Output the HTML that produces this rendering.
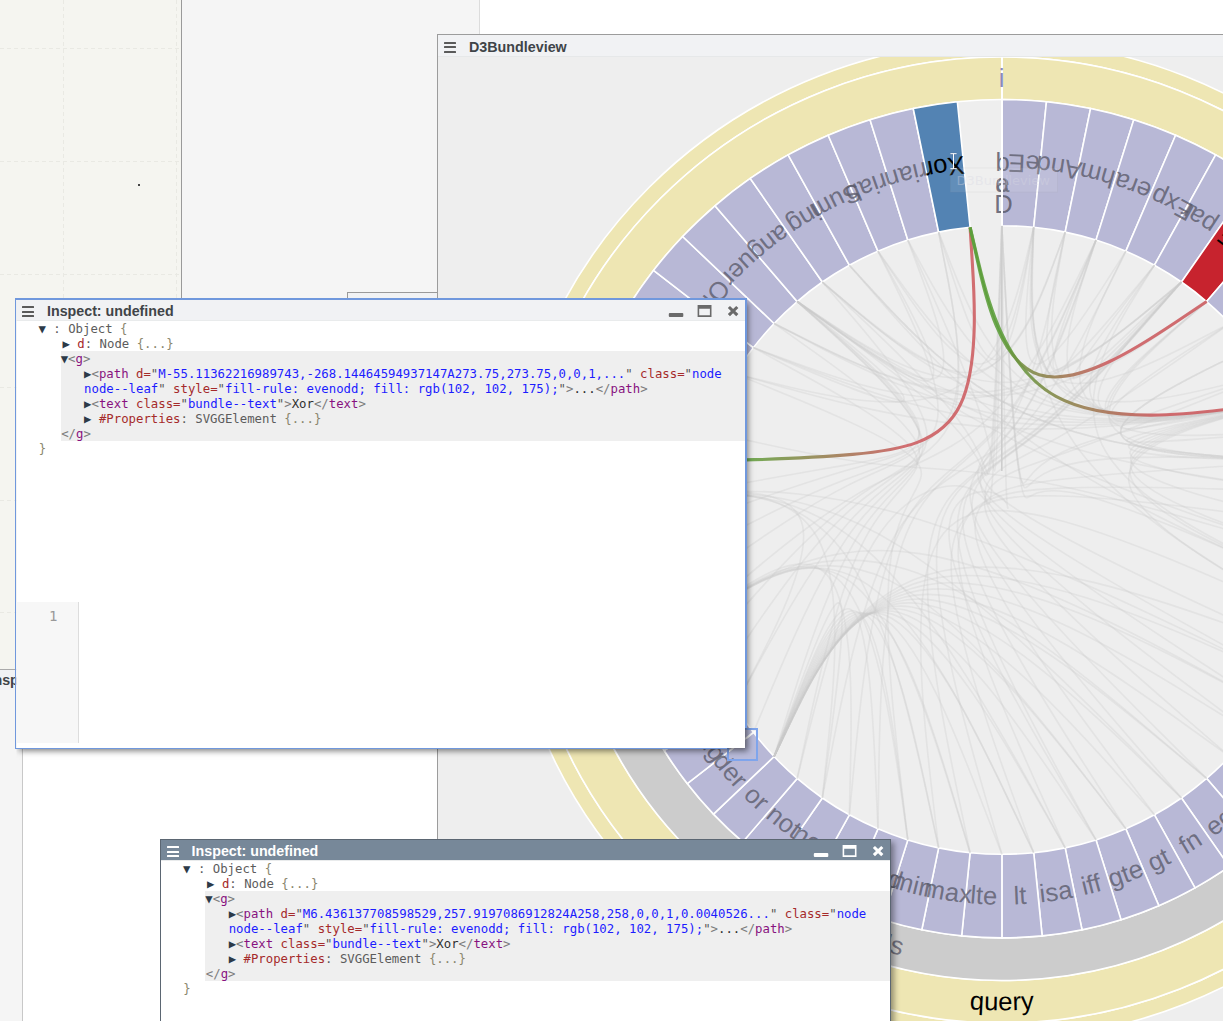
<!DOCTYPE html>
<html lang="en">
<head>
<meta charset="utf-8">
<title>D3Bundleview</title>
<style>
html,body{margin:0;padding:0;}
body{width:1223px;height:1021px;overflow:hidden;position:relative;background:#ffffff;font-family:"Liberation Sans",Arial,sans-serif;}
.abs{position:absolute;}
#paneA{left:0;top:0;width:181px;height:669px;background-color:#f5f5f0;
 background-image:
  repeating-linear-gradient(to bottom,#e9e9e3 0 4px,transparent 4px 7px),
  repeating-linear-gradient(to bottom,#e9e9e3 0 4px,transparent 4px 7px),
  repeating-linear-gradient(to right,#e9e9e3 0 4px,transparent 4px 7px),
  repeating-linear-gradient(to right,#e9e9e3 0 4px,transparent 4px 7px),
  repeating-linear-gradient(to right,#e9e9e3 0 4px,transparent 4px 7px),
  repeating-linear-gradient(to right,#e9e9e3 0 4px,transparent 4px 7px),
  repeating-linear-gradient(to right,#e9e9e3 0 4px,transparent 4px 7px),
  repeating-linear-gradient(to right,#e9e9e3 0 4px,transparent 4px 7px);
 background-repeat:no-repeat;
 background-size:1px 100%,1px 100%,100% 1px,100% 1px,100% 1px,100% 1px,100% 1px,100% 1px;
 background-position:63px 0,176px 0,0 48px,0 161px,0 274px,0 387px,0 500px,0 612px;
 border-right:1px solid #9a9a9a;box-shadow:1px 0 1px rgba(0,0,0,0.15);}
#dot{left:138px;top:184px;width:2px;height:2px;background:#444;}
#paneB{left:182px;top:0;width:297px;height:500px;background:#f5f5f5;border-right:1px solid #dcdcdc;}
#paneC{left:0;top:690px;width:22px;height:340px;background:#f5f5f5;border-right:1px solid #c8c8c8;}
.win{position:absolute;box-sizing:border-box;background:#fff;}
#win1,#win2{clip-path:inset(0px -16px -16px 0px);}
.titlebar{position:absolute;left:0;top:0;right:0;height:20.4px;background:#f1f2f4;box-shadow:0 0.8px 0 #e4e6e8;}
.title{position:absolute;left:30.6px;top:3px;font-weight:bold;font-size:14.25px;line-height:16px;color:#404448;white-space:nowrap;}
.burger{position:absolute;left:5.6px;top:6.3px;width:12.4px;height:11px;}
.burger i{display:block;height:2px;background:#5a5a5a;margin-bottom:2.3px;border-radius:0.5px}
.ctrl{position:absolute;top:0;}
/* hidden window behind */
#winH{left:-42px;top:669px;width:70px;height:22px;background:#f1f2f4;border-top:1px solid #aaa;}
#winG{left:347px;top:292px;width:91px;height:20px;background:#f1f2f4;border:1px solid #9a9a9a;}
#winD3{left:437px;top:34px;width:900px;height:1100px;border:1px solid #9c9c9c;background:#eeeeee;}
#winD3 .titlebar{height:20.8px;}
#winD3 .title{font-size:14.3px;top:3.5px;left:31px;}
#winD3 .burger{top:7px}
svg.bundle{position:absolute;left:438px;top:57px;}
#halo{left:726.6px;top:728.1px;width:27.2px;height:28.7px;border:2px solid #7fa5ec;background:rgba(200,210,245,0.12);}
#win1{left:16.4px;top:300px;width:728.8px;height:447.8px;box-shadow:3px 3px 6px rgba(0,0,0,0.5);}
.bl{position:absolute;background:#7098dd;}
#win2{left:160px;top:839px;width:731.2px;height:300px;border:1px solid #5b6672;box-shadow:3px 3px 6px rgba(0,0,0,0.4);}
#win2 .titlebar{background:#778899;height:20.4px;}
#win2 .title{color:#fff;}
#win2 .burger i{background:#fff;}
.tree{position:absolute;left:0;right:0;top:22.1px;font-family:"DejaVu Sans Mono","Liberation Mono",monospace;font-size:12.32px;line-height:15px;white-space:pre;color:#555;}
.tree div{height:15px;}
.hl{position:absolute;left:44.3px;right:0;top:51.2px;height:89.6px;background:#efefef;}
.ln{position:absolute;}
.tri{color:#2c3a48;}
.k{color:#a52a2a;}
.g{color:#5c5c5c;}
.b{color:#8a866c;}
.br{color:#7c7c7c;}
.t{color:#881280;}
.an{color:#a52a2a;}
.av{color:#1c1cff;}
.q{color:#555;}
.x{color:#303030;}
.gutter{position:absolute;left:0;top:301.9px;width:61.2px;height:140.7px;background:#f7f7f7;border-right:1px solid #dddddd;}
.lnum{position:absolute;left:0;width:41px;top:308.4px;text-align:right;font-family:"DejaVu Sans Mono","Liberation Mono",monospace;font-size:14px;line-height:16px;color:#999;}
</style>
</head>
<body>
<div id="paneA" class="abs"></div>
<div id="dot" class="abs"></div>
<div id="paneB" class="abs"></div>
<div id="winH" class="abs"><div class="title" style="left:31.5px;top:2px">Inspect: undefined</div></div>
<div id="paneC" class="abs"></div>
<div id="winG" class="abs"></div>

<div id="winD3" class="win">
  <div class="titlebar">
    <div class="burger"><i></i><i></i><i></i></div>
    <div class="title">D3Bundleview</div>
  </div>
</div>
<svg class="bundle" width="785" height="964" viewBox="438 57 785 964">
<defs>
<linearGradient id="gA" gradientUnits="userSpaceOnUse" x1="905" y1="0" x2="750" y2="0"><stop offset="0" stop-color="#cd5c60"/><stop offset="1" stop-color="#63a03f"/></linearGradient>
<linearGradient id="gB" gradientUnits="userSpaceOnUse" x1="998" y1="0" x2="1108" y2="0"><stop offset="0" stop-color="#5c9e3a"/><stop offset="1" stop-color="#cd5c60"/></linearGradient>
<linearGradient id="gC" gradientUnits="userSpaceOnUse" x1="1005" y1="0" x2="1155" y2="0"><stop offset="0" stop-color="#5c9e3a"/><stop offset="1" stop-color="#cd5c60"/></linearGradient>
<path id="lp0" d="M1040.08,164.54A377.4,377.4,0,0,0,1001.9,162.6"/>
<path id="lp1" d="M1077.87,170.33A377.4,377.4,0,0,0,1040.08,164.54"/>
<path id="lp2" d="M1114.88,179.91A377.4,377.4,0,0,0,1077.87,170.33"/>
<path id="lp3" d="M1150.73,193.19A377.4,377.4,0,0,0,1114.88,179.91"/>
<path id="lp4" d="M1185.05,210.02A377.4,377.4,0,0,0,1150.73,193.19"/>
<path id="lp5" d="M1217.5,230.24A377.4,377.4,0,0,0,1185.05,210.02"/>
<path id="lp6" d="M1247.73,253.64A377.4,377.4,0,0,0,1217.5,230.24"/>
<path id="lp7" d="M1275.44,279.98A377.4,377.4,0,0,0,1247.73,253.64"/>
<path id="lp8" d="M1300.34,308.99A377.4,377.4,0,0,0,1275.44,279.98"/>
<path id="lp9" d="M1322.18,340.37A377.4,377.4,0,0,0,1300.34,308.99"/>
<path id="lp10" d="M1340.73,373.8A377.4,377.4,0,0,0,1322.18,340.37"/>
<path id="lp11" d="M1355.81,408.93A377.4,377.4,0,0,0,1340.73,373.8"/>
<path id="lp12" d="M1367.25,445.4A377.4,377.4,0,0,0,1355.81,408.93"/>
<path id="lp13" d="M1374.95,482.85A377.4,377.4,0,0,0,1367.25,445.4"/>
<path id="lp14" d="M1378.82,520.89A377.4,377.4,0,0,0,1374.95,482.85"/>
<path id="lp15" d="M1378.82,559.11A377.4,377.4,0,0,0,1378.82,520.89"/>
<path id="lp16" d="M1374.95,597.15A377.4,377.4,0,0,0,1378.82,559.11"/>
<path id="lp17" d="M1367.25,634.6A377.4,377.4,0,0,0,1374.95,597.15"/>
<path id="lp18" d="M1335.83,663.68A356.1,356.1,0,0,0,1346.63,629.26"/>
<path id="lp19" d="M1321.61,696.82A356.1,356.1,0,0,0,1335.83,663.68"/>
<path id="lp20" d="M1304.1,728.36A356.1,356.1,0,0,0,1321.61,696.82"/>
<path id="lp21" d="M1283.5,757.97A356.1,356.1,0,0,0,1304.1,728.36"/>
<path id="lp22" d="M1260,785.34A356.1,356.1,0,0,0,1283.5,757.97"/>
<path id="lp23" d="M1233.85,810.19A356.1,356.1,0,0,0,1260,785.34"/>
<path id="lp24" d="M1205.33,832.27A356.1,356.1,0,0,0,1233.85,810.19"/>
<path id="lp25" d="M1174.72,851.35A356.1,356.1,0,0,0,1205.33,832.27"/>
<path id="lp26" d="M1142.33,867.24A356.1,356.1,0,0,0,1174.72,851.35"/>
<path id="lp27" d="M1108.5,879.77A356.1,356.1,0,0,0,1142.33,867.24"/>
<path id="lp28" d="M1073.58,888.81A356.1,356.1,0,0,0,1108.5,879.77"/>
<path id="lp29" d="M1037.93,894.27A356.1,356.1,0,0,0,1073.58,888.81"/>
<path id="lp30" d="M1001.9,896.1A356.1,356.1,0,0,0,1037.93,894.27"/>
<path id="lp31" d="M965.87,894.27A356.1,356.1,0,0,0,1001.9,896.1"/>
<path id="lp32" d="M930.22,888.81A356.1,356.1,0,0,0,965.87,894.27"/>
<path id="lp33" d="M895.3,879.77A356.1,356.1,0,0,0,930.22,888.81"/>
<path id="lp34" d="M861.47,867.24A356.1,356.1,0,0,0,895.3,879.77"/>
<path id="lp35" d="M829.08,851.35A356.1,356.1,0,0,0,861.47,867.24"/>
<path id="lp36" d="M798.47,832.27A356.1,356.1,0,0,0,829.08,851.35"/>
<path id="lp37" d="M769.95,810.19A356.1,356.1,0,0,0,798.47,832.27"/>
<path id="lp38" d="M743.8,785.34A356.1,356.1,0,0,0,769.95,810.19"/>
<path id="lp39" d="M720.3,757.97A356.1,356.1,0,0,0,743.8,785.34"/>
<path id="lp40" d="M699.7,728.36A356.1,356.1,0,0,0,720.3,757.97"/>
<path id="lp41" d="M682.19,696.82A356.1,356.1,0,0,0,699.7,728.36"/>
<path id="lp42" d="M667.97,663.68A356.1,356.1,0,0,0,682.19,696.82"/>
<path id="lp43" d="M657.17,629.26A356.1,356.1,0,0,0,667.97,663.68"/>
<path id="lp44" d="M649.91,593.92A356.1,356.1,0,0,0,657.17,629.26"/>
<path id="lp45" d="M646.26,558.04A356.1,356.1,0,0,0,649.91,593.92"/>
<path id="lp46" d="M646.26,521.96A356.1,356.1,0,0,0,646.26,558.04"/>
<path id="lp47" d="M649.91,486.08A356.1,356.1,0,0,0,646.26,521.96"/>
<path id="lp48" d="M657.17,450.74A356.1,356.1,0,0,0,649.91,486.08"/>
<path id="lp49" d="M667.97,416.32A356.1,356.1,0,0,0,657.17,450.74"/>
<path id="lp51" d="M681.62,340.37A377.4,377.4,0,0,0,663.07,373.8"/>
<path id="lp52" d="M703.46,308.99A377.4,377.4,0,0,0,681.62,340.37"/>
<path id="lp53" d="M728.36,279.98A377.4,377.4,0,0,0,703.46,308.99"/>
<path id="lp54" d="M756.07,253.64A377.4,377.4,0,0,0,728.36,279.98"/>
<path id="lp55" d="M786.3,230.24A377.4,377.4,0,0,0,756.07,253.64"/>
<path id="lp56" d="M818.75,210.02A377.4,377.4,0,0,0,786.3,230.24"/>
<path id="lp57" d="M853.07,193.19A377.4,377.4,0,0,0,818.75,210.02"/>
<path id="lp58" d="M888.92,179.91A377.4,377.4,0,0,0,853.07,193.19"/>
<path id="lp59" d="M925.93,170.33A377.4,377.4,0,0,0,888.92,179.91"/>
<path id="lp60" d="M963.72,164.54A377.4,377.4,0,0,0,925.93,170.33"/>
<path id="lpm" d="M625.54,355.39A419.2,419.2,0,1,0,1407.72,645.07"/>
<path id="lpq" d="M1001.9,78.25A461.75,461.75,0,1,0,1001.9,1001.75A461.75,461.75,0,1,0,1001.9,78.25"/>
</defs>
<rect x="438" y="57" width="785" height="964" fill="#eeeeee"/>
<g stroke="#fff" stroke-width="1.6" fill-rule="evenodd">
<path d="M1001.9,41.2A498.8,498.8,0,1,1,1001.9,1038.8A498.8,498.8,0,1,1,1001.9,41.2ZM1001.9,57A483,483,0,1,1,1001.9,1023A483,483,0,1,1,1001.9,57Z" fill="#eee6b3"/>
<path d="M1001.9,57A483,483,0,1,1,1001.9,1023A483,483,0,1,1,1001.9,57ZM1001.9,99.5A440.5,440.5,0,1,1,1001.9,980.5A440.5,440.5,0,1,1,1001.9,99.5Z" fill="#eee6b3"/>
<path d="M1428.34,650.41A440.5,440.5,0,1,1,606.42,346.01L644.66,364.77A397.9,397.9,0,1,0,1387.1,639.73Z" fill="#cccccc"/>
<path d="M1001.9,99.5A440.5,440.5,0,0,1,1046.46,101.76L1033.7,227.31A314.3,314.3,0,0,0,1001.9,225.7Z" fill="#b8b8d6"/>
<path d="M1046.46,101.76A440.5,440.5,0,0,1,1090.57,108.52L1065.17,232.13A314.3,314.3,0,0,0,1033.7,227.31Z" fill="#b8b8d6"/>
<path d="M1090.57,108.52A440.5,440.5,0,0,1,1133.77,119.7L1095.99,240.11A314.3,314.3,0,0,0,1065.17,232.13Z" fill="#b8b8d6"/>
<path d="M1133.77,119.7A440.5,440.5,0,0,1,1175.61,135.2L1125.85,251.17A314.3,314.3,0,0,0,1095.99,240.11Z" fill="#b8b8d6"/>
<path d="M1175.61,135.2A440.5,440.5,0,0,1,1215.68,154.85L1154.43,265.19A314.3,314.3,0,0,0,1125.85,251.17Z" fill="#b8b8d6"/>
<path d="M1215.68,154.85A440.5,440.5,0,0,1,1253.54,178.45L1181.45,282.03A314.3,314.3,0,0,0,1154.43,265.19Z" fill="#b8b8d6"/>
<path d="M1253.54,178.45A440.5,440.5,0,0,1,1288.83,205.77L1206.63,301.52A314.3,314.3,0,0,0,1181.45,282.03Z" fill="#c7232e"/>
<path d="M1288.83,205.77A440.5,440.5,0,0,1,1321.17,236.51L1229.7,323.46A314.3,314.3,0,0,0,1206.63,301.52Z" fill="#b8b8d6"/>
<path d="M1321.17,236.51A440.5,440.5,0,0,1,1350.24,270.37L1250.44,347.62A314.3,314.3,0,0,0,1229.7,323.46Z" fill="#b8b8d6"/>
<path d="M1350.24,270.37A440.5,440.5,0,0,1,1375.73,306.99L1268.63,373.75A314.3,314.3,0,0,0,1250.44,347.62Z" fill="#b8b8d6"/>
<path d="M1375.73,306.99A440.5,440.5,0,0,1,1397.38,346.01L1284.08,401.58A314.3,314.3,0,0,0,1268.63,373.75Z" fill="#b8b8d6"/>
<path d="M1397.38,346.01A440.5,440.5,0,0,1,1414.98,387.01L1296.64,430.84A314.3,314.3,0,0,0,1284.08,401.58Z" fill="#b8b8d6"/>
<path d="M1414.98,387.01A440.5,440.5,0,0,1,1428.34,429.59L1306.17,461.22A314.3,314.3,0,0,0,1296.64,430.84Z" fill="#b8b8d6"/>
<path d="M1428.34,429.59A440.5,440.5,0,0,1,1437.32,473.3L1312.58,492.41A314.3,314.3,0,0,0,1306.17,461.22Z" fill="#b8b8d6"/>
<path d="M1437.32,473.3A440.5,440.5,0,0,1,1441.83,517.69L1315.8,524.08A314.3,314.3,0,0,0,1312.58,492.41Z" fill="#b8b8d6"/>
<path d="M1441.83,517.69A440.5,440.5,0,0,1,1441.83,562.31L1315.8,555.92A314.3,314.3,0,0,0,1315.8,524.08Z" fill="#b8b8d6"/>
<path d="M1441.83,562.31A440.5,440.5,0,0,1,1437.32,606.7L1312.58,587.59A314.3,314.3,0,0,0,1315.8,555.92Z" fill="#b8b8d6"/>
<path d="M1437.32,606.7A440.5,440.5,0,0,1,1428.34,650.41L1306.17,618.78A314.3,314.3,0,0,0,1312.58,587.59Z" fill="#b8b8d6"/>
<path d="M1387.1,639.73A397.9,397.9,0,0,1,1375.03,678.19L1296.64,649.16A314.3,314.3,0,0,0,1306.17,618.78Z" fill="#b8b8d6"/>
<path d="M1375.03,678.19A397.9,397.9,0,0,1,1359.14,715.23L1284.08,678.42A314.3,314.3,0,0,0,1296.64,649.16Z" fill="#b8b8d6"/>
<path d="M1359.14,715.23A397.9,397.9,0,0,1,1339.58,750.47L1268.63,706.25A314.3,314.3,0,0,0,1284.08,678.42Z" fill="#b8b8d6"/>
<path d="M1339.58,750.47A397.9,397.9,0,0,1,1316.55,783.56L1250.44,732.38A314.3,314.3,0,0,0,1268.63,706.25Z" fill="#b8b8d6"/>
<path d="M1316.55,783.56A397.9,397.9,0,0,1,1290.3,814.14L1229.7,756.54A314.3,314.3,0,0,0,1250.44,732.38Z" fill="#b8b8d6"/>
<path d="M1290.3,814.14A397.9,397.9,0,0,1,1261.08,841.91L1206.63,778.48A314.3,314.3,0,0,0,1229.7,756.54Z" fill="#b8b8d6"/>
<path d="M1261.08,841.91A397.9,397.9,0,0,1,1229.21,866.58L1181.45,797.97A314.3,314.3,0,0,0,1206.63,778.48Z" fill="#b8b8d6"/>
<path d="M1229.21,866.58A397.9,397.9,0,0,1,1195,887.9L1154.43,814.81A314.3,314.3,0,0,0,1181.45,797.97Z" fill="#b8b8d6"/>
<path d="M1195,887.9A397.9,397.9,0,0,1,1158.81,905.65L1125.85,828.83A314.3,314.3,0,0,0,1154.43,814.81Z" fill="#b8b8d6"/>
<path d="M1158.81,905.65A397.9,397.9,0,0,1,1121.02,919.65L1095.99,839.89A314.3,314.3,0,0,0,1125.85,828.83Z" fill="#b8b8d6"/>
<path d="M1121.02,919.65A397.9,397.9,0,0,1,1082,929.75L1065.17,847.87A314.3,314.3,0,0,0,1095.99,839.89Z" fill="#b8b8d6"/>
<path d="M1082,929.75A397.9,397.9,0,0,1,1042.15,935.86L1033.7,852.69A314.3,314.3,0,0,0,1065.17,847.87Z" fill="#b8b8d6"/>
<path d="M1042.15,935.86A397.9,397.9,0,0,1,1001.9,937.9L1001.9,854.3A314.3,314.3,0,0,0,1033.7,852.69Z" fill="#b8b8d6"/>
<path d="M1001.9,937.9A397.9,397.9,0,0,1,961.65,935.86L970.1,852.69A314.3,314.3,0,0,0,1001.9,854.3Z" fill="#b8b8d6"/>
<path d="M961.65,935.86A397.9,397.9,0,0,1,921.8,929.75L938.63,847.87A314.3,314.3,0,0,0,970.1,852.69Z" fill="#b8b8d6"/>
<path d="M921.8,929.75A397.9,397.9,0,0,1,882.78,919.65L907.81,839.89A314.3,314.3,0,0,0,938.63,847.87Z" fill="#b8b8d6"/>
<path d="M882.78,919.65A397.9,397.9,0,0,1,844.99,905.65L877.95,828.83A314.3,314.3,0,0,0,907.81,839.89Z" fill="#b8b8d6"/>
<path d="M844.99,905.65A397.9,397.9,0,0,1,808.8,887.9L849.37,814.81A314.3,314.3,0,0,0,877.95,828.83Z" fill="#b8b8d6"/>
<path d="M808.8,887.9A397.9,397.9,0,0,1,774.59,866.58L822.35,797.97A314.3,314.3,0,0,0,849.37,814.81Z" fill="#b8b8d6"/>
<path d="M774.59,866.58A397.9,397.9,0,0,1,742.72,841.91L797.17,778.48A314.3,314.3,0,0,0,822.35,797.97Z" fill="#b8b8d6"/>
<path d="M742.72,841.91A397.9,397.9,0,0,1,713.5,814.14L774.1,756.54A314.3,314.3,0,0,0,797.17,778.48Z" fill="#b8b8d6"/>
<path d="M713.5,814.14A397.9,397.9,0,0,1,687.25,783.56L753.36,732.38A314.3,314.3,0,0,0,774.1,756.54Z" fill="#b8b8d6"/>
<path d="M687.25,783.56A397.9,397.9,0,0,1,664.22,750.47L735.17,706.25A314.3,314.3,0,0,0,753.36,732.38Z" fill="#b8b8d6"/>
<path d="M664.22,750.47A397.9,397.9,0,0,1,644.66,715.23L719.72,678.42A314.3,314.3,0,0,0,735.17,706.25Z" fill="#b8b8d6"/>
<path d="M644.66,715.23A397.9,397.9,0,0,1,628.77,678.19L707.16,649.16A314.3,314.3,0,0,0,719.72,678.42Z" fill="#b8b8d6"/>
<path d="M628.77,678.19A397.9,397.9,0,0,1,616.7,639.73L697.63,618.78A314.3,314.3,0,0,0,707.16,649.16Z" fill="#b8b8d6"/>
<path d="M616.7,639.73A397.9,397.9,0,0,1,608.59,600.25L691.22,587.59A314.3,314.3,0,0,0,697.63,618.78Z" fill="#b8b8d6"/>
<path d="M608.59,600.25A397.9,397.9,0,0,1,604.51,560.15L688,555.92A314.3,314.3,0,0,0,691.22,587.59Z" fill="#b8b8d6"/>
<path d="M604.51,560.15A397.9,397.9,0,0,1,604.51,519.85L688,524.08A314.3,314.3,0,0,0,688,555.92Z" fill="#b8b8d6"/>
<path d="M604.51,519.85A397.9,397.9,0,0,1,608.59,479.75L691.22,492.41A314.3,314.3,0,0,0,688,524.08Z" fill="#b8b8d6"/>
<path d="M608.59,479.75A397.9,397.9,0,0,1,616.7,440.27L697.63,461.22A314.3,314.3,0,0,0,691.22,492.41Z" fill="#b8b8d6"/>
<path d="M616.7,440.27A397.9,397.9,0,0,1,628.77,401.81L707.16,430.84A314.3,314.3,0,0,0,697.63,461.22Z" fill="#b8b8d6"/>
<path d="M628.77,401.81A397.9,397.9,0,0,1,644.66,364.77L719.72,401.58A314.3,314.3,0,0,0,707.16,430.84Z" fill="#b8b8d6"/>
<path d="M606.42,346.01A440.5,440.5,0,0,1,628.07,306.99L735.17,373.75A314.3,314.3,0,0,0,719.72,401.58Z" fill="#b8b8d6"/>
<path d="M628.07,306.99A440.5,440.5,0,0,1,653.56,270.37L753.36,347.62A314.3,314.3,0,0,0,735.17,373.75Z" fill="#b8b8d6"/>
<path d="M653.56,270.37A440.5,440.5,0,0,1,682.63,236.51L774.1,323.46A314.3,314.3,0,0,0,753.36,347.62Z" fill="#b8b8d6"/>
<path d="M682.63,236.51A440.5,440.5,0,0,1,714.97,205.77L797.17,301.52A314.3,314.3,0,0,0,774.1,323.46Z" fill="#b8b8d6"/>
<path d="M714.97,205.77A440.5,440.5,0,0,1,750.26,178.45L822.35,282.03A314.3,314.3,0,0,0,797.17,301.52Z" fill="#b8b8d6"/>
<path d="M750.26,178.45A440.5,440.5,0,0,1,788.12,154.85L849.37,265.19A314.3,314.3,0,0,0,822.35,282.03Z" fill="#b8b8d6"/>
<path d="M788.12,154.85A440.5,440.5,0,0,1,828.19,135.2L877.95,251.17A314.3,314.3,0,0,0,849.37,265.19Z" fill="#b8b8d6"/>
<path d="M828.19,135.2A440.5,440.5,0,0,1,870.03,119.7L907.81,240.11A314.3,314.3,0,0,0,877.95,251.17Z" fill="#b8b8d6"/>
<path d="M870.03,119.7A440.5,440.5,0,0,1,913.23,108.52L938.63,232.13A314.3,314.3,0,0,0,907.81,240.11Z" fill="#b8b8d6"/>
<path d="M913.23,108.52A440.5,440.5,0,0,1,957.34,101.76L970.1,227.31A314.3,314.3,0,0,0,938.63,232.13Z" fill="#5383b3"/>
</g>
<g fill="none" stroke="#cbcbcb" stroke-opacity="0.3" stroke-width="1.6">
<path d="M1033.7,227.31L1032.28,262.33C1030.86,297.34,1028.03,367.37,1069.76,396.42C1111.49,425.46,1197.78,413.52,1240.93,407.55L1284.08,401.58"/>
<path d="M1065.17,232.13L1057.93,265.15C1050.69,298.18,1036.22,364.22,1059.8,375.78C1083.37,387.35,1145,344.43,1175.81,322.98L1206.63,301.52"/>
<path d="M1065.17,232.13L1058.9,266.41C1052.63,300.68,1040.09,369.22,1076.58,397.46C1113.06,425.7,1198.57,413.64,1241.33,407.61L1284.08,401.58"/>
<path d="M1095.99,240.11L1083.35,271.45C1070.71,302.79,1045.42,365.46,1055.16,369.64C1064.9,373.82,1109.67,319.51,1132.05,292.35L1154.43,265.19"/>
<path d="M1095.99,240.11L1084.97,273.16C1073.95,306.2,1051.91,372.28,1083.26,399.19C1114.6,426.1,1199.34,413.84,1241.71,407.71L1284.08,401.58"/>
<path d="M1125.85,251.17L1110.22,282.51C1094.6,313.84,1063.35,376.52,1089.72,401.59C1116.1,426.66,1200.09,414.12,1242.08,407.85L1284.08,401.58"/>
<path d="M1125.85,251.17L1107.09,280.33C1088.34,309.49,1050.83,367.8,1035.47,363.83C1020.12,359.85,1026.91,293.58,1030.3,260.45L1033.7,227.31"/>
<path d="M1154.43,265.19L1134.4,294.37C1114.37,323.54,1074.31,381.89,1095.92,404.63C1117.53,427.36,1200.8,414.47,1242.44,408.03L1284.08,401.58"/>
<path d="M1181.45,282.03L1150.62,307.94C1119.79,333.84,1058.13,385.65,986.78,396.58C915.43,407.51,834.4,377.56,793.88,362.59L753.36,347.62"/>
<path d="M1181.45,282.03L1155.63,306.91C1129.82,331.78,1078.18,381.53,1073.68,378.72C1069.18,375.92,1111.8,320.55,1133.12,292.87L1154.43,265.19"/>
<path d="M1181.45,282.03L1157.25,308.61C1133.06,335.19,1084.67,388.35,1101.77,408.27C1118.88,428.2,1201.48,414.89,1242.78,408.24L1284.08,401.58"/>
<path d="M1181.45,282.03L1150.88,307.64C1120.31,333.24,1059.17,384.44,991.28,391.35C923.38,398.25,848.74,360.85,811.42,342.16L774.1,323.46"/>
<path d="M1206.63,301.52L1178.71,325.46C1150.79,349.4,1094.95,397.28,1109.95,418.84C1124.95,440.39,1210.79,435.62,1253.71,433.23L1296.64,430.84"/>
<path d="M1206.63,301.52L1178.55,325.1C1150.47,348.67,1094.32,395.82,1107.23,412.5C1120.14,429.17,1202.11,415.38,1243.09,408.48L1284.08,401.58"/>
<path d="M1229.7,323.46L1198.07,343.65C1166.43,363.84,1103.16,404.23,1112.23,417.25C1121.29,430.27,1202.68,415.93,1243.38,408.76L1284.08,401.58"/>
<path d="M1229.7,323.46L1194.94,341.47C1160.17,359.49,1090.64,395.51,1057.98,379.49C1025.31,363.47,1029.5,295.39,1031.6,261.35L1033.7,227.31"/>
<path d="M1250.44,347.62L1215.88,364.83C1181.33,382.04,1112.22,416.47,1121.5,435.4C1130.79,454.34,1218.48,457.78,1262.32,459.5L1306.17,461.22"/>
<path d="M1268.63,373.75L1230.99,386.19C1193.36,398.63,1118.09,423.51,1120.66,428.14C1123.24,432.78,1203.66,417.18,1243.87,409.38L1284.08,401.58"/>
<path d="M1268.63,373.75L1227.86,384.01C1187.1,394.27,1105.57,414.79,1066.41,390.39C1027.26,365.98,1030.48,296.65,1032.09,261.98L1033.7,227.31"/>
<path d="M1296.64,430.84L1254.68,434.48C1212.73,438.12,1128.82,445.39,1126.73,440.52C1124.64,435.64,1204.36,418.61,1244.22,410.1L1284.08,401.58"/>
<path d="M1306.17,461.22L1262.32,459.5C1218.48,457.78,1130.79,454.34,1121.5,435.4C1112.22,416.47,1181.33,382.04,1215.88,364.83L1250.44,347.62"/>
<path d="M1306.17,461.22L1261.78,458.92C1217.38,456.63,1128.6,452.03,1112.01,425.42C1095.42,398.8,1151.02,350.16,1178.83,325.84L1206.63,301.52"/>
<path d="M1306.17,461.22L1262.74,460.17C1219.32,459.13,1132.47,457.04,1128.79,447.1C1125.11,437.16,1204.6,419.37,1244.34,410.48L1284.08,401.58"/>
<path d="M1306.17,461.22L1257.31,458.47C1208.45,455.72,1110.74,450.22,1034.61,417.55C958.47,384.87,903.92,325.03,876.65,295.11L849.37,265.19"/>
<path d="M1312.58,492.41L1268.16,486.55C1223.75,480.7,1134.93,468.99,1130.18,453.85C1125.43,438.72,1204.76,420.15,1244.42,410.87L1284.08,401.58"/>
<path d="M1315.8,524.08L1270.89,513.34C1225.98,502.61,1136.17,481.13,1130.88,460.72C1125.59,440.3,1204.84,420.94,1244.46,411.26L1284.08,401.58"/>
<path d="M1315.8,555.92L1270.89,540.27C1225.98,524.63,1136.17,493.34,1130.88,467.62C1125.59,441.89,1204.84,421.74,1244.46,411.66L1284.08,401.58"/>
<path d="M1312.58,587.59L1266.54,565.36C1220.51,543.13,1128.45,498.66,1102.09,444.93C1075.73,391.19,1115.08,328.19,1134.76,296.69L1154.43,265.19"/>
<path d="M1312.58,587.59L1268.16,567.07C1223.75,546.54,1134.93,505.48,1130.18,474.48C1125.43,443.48,1204.76,422.53,1244.42,412.06L1284.08,401.58"/>
<path d="M1312.58,587.59L1262.73,565.36C1212.89,543.13,1113.2,498.66,1035.99,444.93C958.79,391.19,904.08,328.19,876.73,296.69L849.37,265.19"/>
<path d="M1306.17,618.78L1262.74,593.44C1219.32,568.11,1132.47,517.43,1128.79,481.24C1125.11,445.04,1204.6,423.31,1244.34,412.45L1284.08,401.58"/>
<path d="M1306.17,618.78L1259.61,591.27C1213.06,563.75,1119.96,508.72,1074.54,443.48C1029.13,378.23,1031.41,302.77,1032.56,265.04L1033.7,227.31"/>
<path d="M735.17,373.75L779.78,386.19C824.38,398.63,913.59,423.51,1005.08,428.14C1096.56,432.78,1190.32,417.18,1237.2,409.38L1284.08,401.58"/>
<path d="M735.17,373.75L776.65,384.01C818.12,394.27,901.07,414.79,950.83,390.39C1000.58,365.98,1017.14,296.65,1025.42,261.98L1033.7,227.31"/>
<path d="M753.36,347.62L795.16,364.08C836.96,380.55,920.57,413.49,1009.02,422.48C1097.47,431.48,1190.78,416.53,1237.43,409.06L1284.08,401.58"/>
<path d="M774.1,323.46L811.73,342.4C849.37,361.34,924.64,399.22,996.73,395.57C1068.82,391.91,1137.72,346.72,1172.17,324.12L1206.63,301.52"/>
<path d="M774.1,323.46L812.7,343.65C851.31,363.84,928.51,404.23,1013.51,417.25C1098.51,430.27,1191.29,415.93,1237.69,408.76L1284.08,401.58"/>
<path d="M797.17,301.52L827.52,323.08C857.86,344.63,918.55,387.75,936.99,377.51C955.43,367.28,931.62,303.7,919.71,271.9L907.81,240.11"/>
<path d="M797.17,301.52L827.14,323.22C857.11,344.91,917.05,388.3,930.52,379.91C943.98,371.52,910.97,311.34,894.46,281.26L877.95,251.17"/>
<path d="M797.17,301.52L832.22,325.1C867.27,348.67,937.36,395.82,1018.51,412.5C1099.66,429.17,1191.87,415.38,1237.98,408.48L1284.08,401.58"/>
<path d="M797.17,301.52L825.59,324.42C854,347.32,910.82,393.12,903.52,400.8C896.22,408.49,824.79,378.05,789.07,362.83L753.36,347.62"/>
<path d="M797.17,301.52L829.48,322.98C861.79,344.43,926.41,387.35,971.08,375.78C1015.75,364.22,1040.46,298.18,1052.81,265.15L1065.17,232.13"/>
<path d="M797.17,301.52L832.62,327.03C868.06,352.53,938.95,403.54,1025.38,445.94C1111.82,488.34,1213.81,522.13,1264.8,539.02L1315.8,555.92"/>
<path d="M797.17,301.52L832.58,326.23C867.98,350.94,938.79,400.36,1024.69,432.17C1110.59,463.99,1211.58,478.2,1262.08,485.3L1312.58,492.41"/>
<path d="M822.35,282.03L850.78,306.49C879.21,330.96,936.07,379.88,976.54,371.56C1017.01,363.24,1041.09,297.69,1053.13,264.91L1065.17,232.13"/>
<path d="M822.35,282.03L852.23,307.12C882.12,332.2,941.88,382.37,1001.73,382.37C1061.58,382.37,1121.51,332.2,1151.48,307.12L1181.45,282.03"/>
<path d="M822.35,282.03L853.52,308.61C884.68,335.19,947.01,388.35,1023.97,408.27C1100.92,428.2,1192.5,414.89,1238.29,408.24L1284.08,401.58"/>
<path d="M849.37,265.19L876.65,295.11C903.92,325.03,958.47,384.87,1034.61,417.55C1110.74,450.22,1208.45,455.72,1257.31,458.47L1306.17,461.22"/>
<path d="M877.95,251.17L900.55,282.51C923.14,313.84,968.33,376.52,1036.01,401.59C1103.7,426.66,1193.89,414.12,1238.99,407.85L1284.08,401.58"/>
<path d="M877.95,251.17L897.42,280.33C916.88,309.49,955.81,367.8,981.76,363.83C1007.72,359.85,1020.71,293.58,1027.2,260.45L1033.7,227.31"/>
<path d="M907.81,240.11L925.8,273.16C943.79,306.2,979.77,372.28,1042.48,399.19C1105.19,426.1,1194.64,413.84,1239.36,407.71L1284.08,401.58"/>
<path d="M938.63,232.13L951.87,266.41C965.11,300.68,991.59,369.22,1049.16,397.46C1106.74,425.7,1195.41,413.64,1239.74,407.61L1284.08,401.58"/>
<path d="M938.63,232.13L948.74,264.23C958.85,296.32,979.07,360.51,994.91,359.7C1010.76,358.9,1022.23,293.11,1027.96,260.21L1033.7,227.31"/>
<path d="M1296.64,649.16L1234.68,620.41C1172.72,591.66,1048.81,534.17,1003.67,500.43C958.53,466.69,992.16,456.7,1020.68,417.27C1049.19,377.84,1072.59,308.98,1084.29,274.55L1095.99,240.11"/>
<path d="M1284.08,678.42L1223.75,645.21C1163.42,612.01,1042.76,545.61,999.09,507.1C955.43,468.59,988.75,457.98,1012.6,416.8C1036.44,375.62,1050.81,303.88,1057.99,268.01L1065.17,232.13"/>
<path d="M1268.63,706.25L1211.12,669.03C1153.62,631.82,1038.6,557.38,998.39,514.78C958.19,472.18,992.78,461.42,1026.49,422.79C1060.2,384.17,1093.02,317.67,1109.43,284.42L1125.85,251.17"/>
<path d="M1250.44,732.38L1196.53,691.85C1142.62,651.31,1034.79,570.24,999.19,524.71C963.59,479.18,1000.22,469.19,1050.68,441.57C1101.14,413.95,1165.42,368.71,1197.56,346.08L1229.7,323.46"/>
<path d="M1229.7,756.54L1179.22,712.8C1128.75,669.06,1027.79,581.58,996.13,533.06C964.46,484.54,1002.08,474.99,1059.05,454.93C1116.01,434.87,1192.32,404.31,1230.48,389.03L1268.63,373.75"/>
<path d="M1206.63,778.48L1158.17,730.33C1109.72,682.19,1012.81,585.9,981.92,531.68C951.03,477.46,986.16,465.32,1016.17,423.73C1046.19,382.15,1071.09,311.13,1083.54,275.62L1095.99,240.11"/>
<path d="M1181.45,797.97L1137.48,747.25C1093.52,696.53,1005.58,595.09,980.11,538.49C954.63,481.88,991.6,470.11,1035.57,434.84C1079.53,399.57,1130.49,340.8,1155.97,311.42L1181.45,282.03"/>
<path d="M1154.43,814.81L1115.56,763.06C1076.68,711.3,998.93,607.8,979.81,551.52C960.69,495.23,1000.19,486.16,1064.36,478.98C1128.52,471.8,1217.34,466.51,1261.76,463.87L1306.17,461.22"/>
<path d="M1125.85,828.83L1090.22,773.48C1054.59,718.13,983.34,607.44,966.67,545.94C949.99,484.45,987.9,472.17,1032.79,436.38C1077.68,400.6,1129.57,341.32,1155.51,311.68L1181.45,282.03"/>
<path d="M1095.99,839.89L1064.84,782.88C1033.7,725.87,971.4,611.86,959.45,548.62C947.51,485.37,985.91,472.9,1031.3,436.94C1076.69,400.97,1129.07,341.5,1155.26,311.77L1181.45,282.03"/>
<path d="M1065.17,847.87L1039.74,791.42C1014.31,734.96,963.44,622.06,958.56,561.06C953.68,500.06,994.78,490.97,1061.44,488.17C1128.11,485.38,1220.34,488.89,1266.46,490.65L1312.58,492.41"/>
<path d="M1033.7,852.69L1013.01,795.78C992.33,738.87,950.96,625.05,951.12,563.81C951.27,502.58,992.95,493.93,1060.65,496.07C1128.35,498.21,1222.07,511.15,1268.93,517.61L1315.8,524.08"/>
<path d="M1001.9,854.3L984.87,795.13C967.83,735.96,933.76,617.62,936.71,552.1C939.66,486.58,979.63,473.86,1026.59,437.66C1073.55,401.45,1127.5,341.74,1154.47,311.89L1181.45,282.03"/>
<path d="M970.1,852.69L957.84,793.76C945.57,734.83,921.05,616.98,929.03,551.71C937.02,486.44,977.51,473.76,1025,437.58C1072.49,401.39,1126.97,341.71,1154.21,311.87L1181.45,282.03"/>
<path d="M938.63,847.87L932.13,792.47C925.62,737.07,912.61,626.28,927.66,567.38C942.71,508.49,985.81,501.5,1053.57,518.71C1121.33,535.93,1213.75,577.36,1259.96,598.07L1306.17,618.78"/>
<path d="M907.81,839.89L901.17,783.64C894.53,727.4,881.25,614.92,891.66,553.2C902.07,491.49,936.17,480.55,914.04,459.1C891.9,437.65,813.54,405.7,774.35,389.72L735.17,373.75"/>
<path d="M877.95,828.83L878.8,773.13C879.65,717.43,881.34,606.04,902.49,543.85C923.64,481.66,964.25,468.67,999.74,426.25C1035.23,383.83,1065.61,311.97,1080.8,276.04L1095.99,240.11"/>
<path d="M849.37,814.81L854.5,761.21C859.64,707.62,869.9,600.43,895.58,540.46C921.26,480.49,962.34,467.74,998.31,425.55C1034.28,383.36,1065.14,311.74,1080.56,275.93L1095.99,240.11"/>
<path d="M822.35,797.97L832.25,747.25C842.15,696.53,861.95,595.09,893.32,538.49C924.7,481.88,967.66,470.11,1017.61,434.84C1067.56,399.57,1124.51,340.8,1152.98,311.42L1181.45,282.03"/>
<path d="M797.17,778.48L807.28,731.23C817.39,683.98,837.6,589.48,865.83,537.06C894.07,484.63,930.31,474.27,912.9,449.71C895.49,425.15,824.42,386.38,788.89,367L753.36,347.62"/>
<path d="M774.1,756.54L787.84,712.38C801.58,668.22,829.07,579.9,861.3,530.55C893.52,481.19,930.5,470.8,916.76,442.78C903.02,414.76,838.56,369.11,806.33,346.28L774.1,323.46"/>
<path d="M753.36,732.38L770.4,691.67C787.45,650.95,821.54,569.51,857.44,523.61C893.33,477.72,931.04,467.36,921.3,436.27C911.55,405.18,854.36,353.35,825.77,327.44L797.17,301.52"/>
<path d="M735.17,706.25L755.15,669.29C775.14,632.33,815.1,558.41,854.3,516.32C893.5,474.24,931.93,463.99,926.47,430.25C921.02,396.51,871.68,339.27,847.02,310.65L822.35,282.03"/>
<path d="M719.72,678.42L741.81,645.79C763.9,613.17,808.08,547.92,849.31,510.57C890.53,473.22,928.8,463.76,919.62,433.57C910.43,403.38,853.8,352.45,825.49,326.99L797.17,301.52"/>
<path d="M707.16,649.16L732.32,620.34C757.47,591.53,807.78,533.9,853.35,500.03C898.92,466.15,939.75,456.03,953.17,415.34C966.6,374.65,952.62,303.39,945.62,267.76L938.63,232.13"/>
<path d="M697.63,618.78L725.53,594.59C753.42,570.4,809.21,522.02,858.91,493.09C908.61,464.15,952.23,454.67,990.73,415.75C1029.22,376.83,1062.61,308.47,1079.3,274.29L1095.99,240.11"/>
<path d="M691.22,587.59L718.26,568.17C745.3,548.75,799.38,509.91,846.46,486.1C893.54,462.29,933.63,453.51,937.71,416.86C941.8,380.21,909.87,315.69,893.91,283.43L877.95,251.17"/>
<path d="M688,555.92L714.85,541.67C741.7,527.42,795.4,498.92,841.64,480.97C887.89,463.01,926.68,455.6,918.03,427.45C909.38,399.3,853.27,350.41,825.22,325.97L797.17,301.52"/>
<path d="M688,524.08L716.03,514.03C744.06,503.98,800.11,483.87,848.72,469.8C897.32,455.73,938.47,447.69,952.22,409.09C965.96,370.48,952.3,301.31,945.46,266.72L938.63,232.13"/>
<path d="M691.22,492.41L717.59,487.68C743.95,482.96,796.69,473.52,842.42,465.62C888.16,457.72,926.9,451.36,918.19,424.27C909.48,397.18,853.33,349.35,825.25,325.44L797.17,301.52"/>
<path d="M707.16,430.84L735.46,437.47C763.76,444.11,820.35,457.37,872.2,463.46C924.06,469.55,971.18,468.46,1044.32,482.67C1117.46,496.89,1216.63,526.4,1266.21,541.16L1315.8,555.92"/>
<path d="M774.1,756.54L794.37,714.65C814.65,672.76,855.19,588.97,942.28,571.07C1029.37,553.17,1163,601.17,1229.82,625.16L1296.64,649.16"/>
<path d="M774.1,756.54L794.21,715.01C814.33,673.49,854.56,590.43,939.56,577.41C1024.56,564.39,1154.32,621.4,1219.2,649.91L1284.08,678.42"/>
<path d="M774.1,756.54L794.02,715.36C813.94,674.18,853.79,591.82,936.21,583.44C1018.64,575.06,1143.63,640.66,1206.13,673.46L1268.63,706.25"/>
<path d="M774.1,756.54L793.79,715.69C813.49,674.84,852.88,593.13,932.27,589.1C1011.66,585.08,1131.05,658.73,1190.75,695.56L1250.44,732.38"/>
<path d="M774.1,756.54L793.53,715.99C812.97,675.44,851.85,594.34,927.78,594.34C1003.71,594.34,1116.71,675.44,1173.21,715.99L1229.7,756.54"/>
<path d="M774.1,756.54L793.25,716.27C812.39,675.99,850.69,595.44,922.78,599.09C994.87,602.75,1100.75,690.61,1153.69,734.54L1206.63,778.48"/>
<path d="M774.1,756.54L792.93,716.51C811.77,676.48,849.43,596.41,917.33,603.31C985.22,610.22,1083.33,704.09,1132.39,751.03L1181.45,797.97"/>
<path d="M774.1,756.54L792.59,716.72C811.09,676.9,848.08,597.25,911.47,606.96C974.86,616.67,1064.65,715.74,1109.54,765.27L1154.43,814.81"/>
<path d="M774.1,756.54L792.24,716.89C810.38,677.25,846.65,597.95,905.28,610C963.9,622.05,1044.87,725.44,1085.36,777.13L1125.85,828.83"/>
<path d="M774.1,756.54L791.86,717.03C809.63,677.52,845.16,598.51,898.81,612.4C952.46,626.29,1024.22,733.09,1060.11,786.49L1095.99,839.89"/>
<path d="M774.1,756.54L791.48,717.13C808.86,677.72,843.62,598.9,892.13,614.13C940.64,629.35,1002.91,738.61,1034.04,793.24L1065.17,847.87"/>
<path d="M774.1,756.54L791.08,717.19C808.07,677.84,842.05,599.15,885.31,615.17C928.58,631.19,981.14,741.94,1007.42,797.31L1033.7,852.69"/>
<path d="M774.1,756.54L790.69,717.21C807.28,677.88,840.46,599.23,878.42,615.52C916.39,631.81,959.14,743.06,980.52,798.68L1001.9,854.3"/>
<path d="M774.1,756.54L790.29,717.19C806.48,677.84,838.87,599.15,871.53,615.17C904.2,631.19,937.15,741.94,953.63,797.31L970.1,852.69"/>
<path d="M774.1,756.54L789.9,717.13C805.69,677.72,837.29,598.9,864.71,614.13C892.14,629.35,915.38,738.61,927.01,793.24L938.63,847.87"/>
<path d="M774.1,756.54L789.51,717.03C804.92,677.52,835.75,598.51,858.04,612.4C880.32,626.29,894.07,733.09,900.94,786.49L907.81,839.89"/>
<path d="M774.1,756.54L789.14,716.89C804.18,677.25,834.26,597.95,851.57,610C868.88,622.05,873.42,725.44,875.68,777.13L877.95,828.83"/>
<path d="M774.1,756.54L788.44,716.51C802.79,676.48,831.48,596.41,839.52,603.31C847.56,610.22,834.96,704.09,828.65,751.03L822.35,797.97"/>
<path d="M697.63,618.78L729.35,598.84C761.06,578.9,824.48,539.02,919.65,553.59C1014.81,568.17,1141.72,637.21,1205.17,671.73L1268.63,706.25"/>
<path d="M697.63,618.78L728.57,599.74C759.51,580.7,821.38,542.63,906.21,569.24C991.05,595.86,1098.84,687.17,1152.73,732.82L1206.63,778.48"/>
<path d="M697.63,618.78L727.56,600.37C757.49,581.96,817.34,545.14,888.71,580.15C960.08,615.16,1042.96,721.99,1084.4,775.41L1125.85,828.83"/>
<path d="M697.63,618.78L726.41,600.67C755.18,582.56,812.73,546.34,868.74,585.32C924.76,624.31,979.23,738.5,1006.46,795.59L1033.7,852.69"/>
<path d="M697.63,618.78L725.61,600.67C753.59,582.56,809.55,546.34,854.97,585.32C900.38,624.31,935.24,738.5,952.67,795.59L970.1,852.69"/>
<path d="M697.63,618.78L724.84,600.51C752.04,582.24,806.44,545.7,841.47,582.55C876.5,619.4,892.15,729.64,899.98,784.76L907.81,839.89"/>
<path d="M697.63,618.78L724.1,600.2C750.58,581.61,803.52,544.44,828.81,577.11C854.1,609.79,851.73,712.3,850.55,763.55L849.37,814.81"/>
<path d="M691.22,492.41L724.12,491.6C757.01,490.79,822.8,489.18,921.61,520.18C1020.42,551.18,1152.25,614.8,1218.16,646.61L1284.08,678.42"/>
<path d="M691.22,492.41L722.83,493.09C754.44,493.78,817.67,495.16,899.37,546.08C981.07,597.01,1081.26,697.49,1131.36,747.73L1181.45,797.97"/>
<path d="M691.22,492.41L721.38,493.72C751.54,495.03,811.85,497.65,874.18,556.9C936.5,616.14,1000.83,732,1033,789.93L1065.17,847.87"/>
<path d="M691.22,492.41L719.8,493.72C748.37,495.03,805.52,497.65,846.76,556.9C887.99,616.14,913.31,732,925.97,789.93L938.63,847.87"/>
<path d="M691.22,492.41L718.35,493.09C745.47,493.78,799.71,495.16,821.56,546.08C843.42,597.01,832.88,697.49,827.62,747.73L822.35,797.97"/>
<path d="M691.22,492.41L717.26,491.95C743.29,491.49,795.35,490.57,802.68,526.21C810,561.85,772.59,634.05,753.88,670.15L735.17,706.25"/>
<path d="M797.17,301.52L827.41,323.37C857.65,345.22,918.13,388.92,949.69,421.76C981.25,454.59,983.9,476.57,986.45,475.62C989.01,474.67,991.48,450.8,994.03,405.33C996.57,359.86,999.19,292.78,1000.49,259.24L1001.8,225.7"/>
<path d="M907.81,240.11L921.68,271.05C935.56,301.98,963.31,363.85,977.81,406.15C992.32,448.45,993.58,471.19,994.75,471.01C995.93,470.83,997.02,447.73,998.18,403.03C999.34,358.32,1000.57,292.01,1001.18,258.86L1001.8,225.7"/>
<path d="M1284.08,401.58L1242.3,408.63C1200.52,415.68,1116.95,429.78,1073.45,447.19C1029.94,464.6,1026.5,485.32,1022.97,483.12C1019.44,480.93,1015.83,455.81,1012.29,409.08C1008.74,362.36,1005.27,294.03,1003.54,259.86L1001.8,225.7"/>
<path d="M1306.17,461.22L1261.12,459.45C1216.07,457.68,1125.97,454.13,1079.06,462.35C1032.15,470.56,1028.43,490.54,1024.63,487.6C1020.82,484.65,1016.93,458.79,1013.11,411.32C1009.3,363.85,1005.55,294.77,1003.67,260.24L1001.8,225.7"/>
<path d="M1312.58,587.59L1266.58,567.13C1220.58,546.66,1128.59,505.73,1080.69,494.47C1032.79,483.2,1028.99,501.6,1025.11,497.08C1021.22,492.55,1017.25,465.11,1013.35,416.06C1009.46,367.01,1005.63,296.35,1003.71,261.03L1001.8,225.7"/>
<path d="M822.35,282.03L848.87,306.77C875.38,331.5,928.41,380.96,956.09,416.8C983.77,452.65,986.1,474.86,988.34,474.16C990.58,473.45,992.74,449.83,994.97,404.6C997.2,359.37,999.5,292.53,1000.65,259.12L1001.8,225.7"/>
<path d="M1095.99,839.89L1063.66,784.46C1031.33,729.03,966.67,618.17,952.35,558.08C938.04,498,974.07,488.68,991.66,492.41C1009.25,496.15,1008.39,512.93,1007.45,506.78C1006.51,500.64,1005.48,471.58,1004.53,420.91C1003.57,370.24,1002.69,297.97,1002.24,261.84L1001.8,225.7"/>
<path d="M797.17,778.48L808.67,732.06C820.17,685.63,843.16,592.79,874.16,542.02C905.17,491.24,944.19,482.54,964.77,486.89C985.34,491.23,987.48,508.63,989.52,503.1C991.57,497.57,993.53,469.12,995.56,419.07C997.59,369.02,999.7,297.36,1000.75,261.53L1001.8,225.7"/>
</g>
<path d="M1001.8,225.7 L1001.8,471" fill="none" stroke="#cdcdcd" stroke-width="1.6"/>
<g fill="none" stroke-width="3.1" stroke-opacity="0.88" stroke-linecap="butt">
<path d="M697.63,461.22L724.48,460.56C751.32,459.89,805.01,458.57,852.62,454.37C900.22,450.17,941.74,443.1,960.3,404.78C978.87,366.46,974.49,296.88,972.29,262.1L970.1,227.31" stroke="url(#gA)"/>
<path d="M970.1,227.31L978.49,262.33C986.88,297.34,1003.65,367.37,1055.98,396.42C1108.31,425.46,1196.19,413.52,1240.14,407.55L1284.08,401.58" stroke="url(#gC)"/>
<path d="M970.1,227.31L977.52,261.08C984.94,294.84,999.78,362.37,1039.2,374.74C1078.62,387.11,1142.62,344.31,1174.62,322.92L1206.63,301.52" stroke="url(#gB)"/>
</g>
<g font-family="'Liberation Sans', Arial, sans-serif" font-size="25.6" fill="#5b5b6b" fill-opacity="0.8" text-anchor="middle">
<text dy="8.5"><textPath href="#lp0" startOffset="50%">AggregateExpression</textPath></text>
<text dy="8.5"><textPath href="#lp1" startOffset="50%">And</textPath></text>
<text dy="8.5"><textPath href="#lp2" startOffset="50%">Arithmetic</textPath></text>
<text dy="8.5"><textPath href="#lp3" startOffset="50%">Average</textPath></text>
<text dy="8.5"><textPath href="#lp4" startOffset="50%">BinaryExpression</textPath></text>
<text dy="8.5"><textPath href="#lp5" startOffset="50%">Comparison</textPath></text>
<text dy="8.5" fill="#000" fill-opacity="1"><textPath href="#lp6" startOffset="50%">CompositeExpression</textPath></text>
<text dy="8.5"><textPath href="#lp7" startOffset="50%">Count</textPath></text>
<text dy="8.5"><textPath href="#lp8" startOffset="50%">DateUtil</textPath></text>
<text dy="8.5"><textPath href="#lp9" startOffset="50%">Distinct</textPath></text>
<text dy="8.5"><textPath href="#lp10" startOffset="50%">Expression</textPath></text>
<text dy="8.5"><textPath href="#lp11" startOffset="50%">ExpressionIterator</textPath></text>
<text dy="8.5"><textPath href="#lp12" startOffset="50%">Fn</textPath></text>
<text dy="8.5"><textPath href="#lp13" startOffset="50%">If</textPath></text>
<text dy="8.5"><textPath href="#lp14" startOffset="50%">IsA</textPath></text>
<text dy="8.5"><textPath href="#lp15" startOffset="50%">Literal</textPath></text>
<text dy="8.5"><textPath href="#lp16" startOffset="50%">Match</textPath></text>
<text dy="8.5"><textPath href="#lp17" startOffset="50%">Maximum</textPath></text>
<text dy="8.5"><textPath href="#lp18" startOffset="50%">add</textPath></text>
<text dy="8.5"><textPath href="#lp19" startOffset="50%">and</textPath></text>
<text dy="8.5"><textPath href="#lp20" startOffset="50%">average</textPath></text>
<text dy="8.5"><textPath href="#lp21" startOffset="50%">count</textPath></text>
<text dy="8.5"><textPath href="#lp22" startOffset="50%">distinct</textPath></text>
<text dy="8.5"><textPath href="#lp23" startOffset="50%">div</textPath></text>
<text dy="8.5"><textPath href="#lp24" startOffset="50%">eq</textPath></text>
<text dy="8.5"><textPath href="#lp25" startOffset="50%">fn</textPath></text>
<text dy="8.5"><textPath href="#lp26" startOffset="50%">gt</textPath></text>
<text dy="8.5"><textPath href="#lp27" startOffset="50%">gte</textPath></text>
<text dy="8.5"><textPath href="#lp28" startOffset="50%">iff</textPath></text>
<text dy="8.5"><textPath href="#lp29" startOffset="50%">isa</textPath></text>
<text dy="8.5"><textPath href="#lp30" startOffset="50%">lt</textPath></text>
<text dy="8.5"><textPath href="#lp31" startOffset="50%">lte</textPath></text>
<text dy="8.5"><textPath href="#lp32" startOffset="50%">max</textPath></text>
<text dy="8.5"><textPath href="#lp33" startOffset="50%">min</textPath></text>
<text dy="8.5"><textPath href="#lp34" startOffset="50%">mod</textPath></text>
<text dy="8.5"><textPath href="#lp35" startOffset="50%">mul</textPath></text>
<text dy="8.5"><textPath href="#lp36" startOffset="50%">neq</textPath></text>
<text dy="8.5"><textPath href="#lp37" startOffset="50%">not</textPath></text>
<text dy="8.5"><textPath href="#lp38" startOffset="50%">or</textPath></text>
<text dy="8.5"><textPath href="#lp39" startOffset="50%">orderby</textPath></text>
<text dy="8.5"><textPath href="#lp40" startOffset="50%">range</textPath></text>
<text dy="8.5"><textPath href="#lp41" startOffset="50%">select</textPath></text>
<text dy="8.5"><textPath href="#lp42" startOffset="50%">stddev</textPath></text>
<text dy="8.5"><textPath href="#lp43" startOffset="50%">sub</textPath></text>
<text dy="8.5"><textPath href="#lp44" startOffset="50%">sum</textPath></text>
<text dy="8.5"><textPath href="#lp45" startOffset="50%">update</textPath></text>
<text dy="8.5"><textPath href="#lp46" startOffset="50%">variance</textPath></text>
<text dy="8.5"><textPath href="#lp47" startOffset="50%">where</textPath></text>
<text dy="8.5"><textPath href="#lp48" startOffset="50%">xor</textPath></text>
<text dy="8.5"><textPath href="#lp49" startOffset="50%">_</textPath></text>
<text dy="8.5"><textPath href="#lp51" startOffset="50%">Minimum</textPath></text>
<text dy="8.5"><textPath href="#lp52" startOffset="50%">Not</textPath></text>
<text dy="8.5"><textPath href="#lp53" startOffset="50%">Or</textPath></text>
<text dy="8.5"><textPath href="#lp54" startOffset="50%">Query</textPath></text>
<text dy="8.5"><textPath href="#lp55" startOffset="50%">Range</textPath></text>
<text dy="8.5"><textPath href="#lp56" startOffset="50%">StringUtil</textPath></text>
<text dy="8.5"><textPath href="#lp57" startOffset="50%">Sum</textPath></text>
<text dy="8.5"><textPath href="#lp58" startOffset="50%">Variable</textPath></text>
<text dy="8.5"><textPath href="#lp59" startOffset="50%">Variance</textPath></text>
<text dy="8.5" fill="#000" fill-opacity="1"><textPath href="#lp60" startOffset="50%">Xor</textPath></text>
<text dy="8.5"><textPath href="#lpm" startOffset="50%">methods</textPath></text>
<text dy="8.5" fill="#000" fill-opacity="1"><textPath href="#lpq" startOffset="50%">query</textPath></text>
</g>
<g font-family="'Liberation Sans', Arial, sans-serif" font-size="25.6" fill="#5b5b6b" fill-opacity="0.85">
<text x="994.3" y="213.3">D</text>
<text x="995.3" y="191.8">e</text>
<text x="995.3" y="191.8">a</text>
<text x="995.4" y="170.6">b</text>
</g>
<path d="M1002,225.7L1002,41.2" fill="none" stroke="#fff" stroke-width="2"/>
<text x="998.8" y="86.9" font-family="'Liberation Sans', Arial, sans-serif" font-size="25.6" fill="#8a8ab8">i</text>
<g opacity="0.42">
<rect x="950.5" y="168" width="107" height="24" fill="#fff" fill-opacity="0.22" stroke="#999" stroke-opacity="0.25" stroke-width="1"/>
<text x="956.5" y="185" font-family="'DejaVu Sans', 'Liberation Sans', sans-serif" font-size="13" fill="#dcdce6">D3Bundleview</text>
</g>
<g fill="none" stroke-linecap="butt">
<path d="M950.3,153.7h6.4M953.5,153.7v15M950.3,168.7h6.4" stroke="#446" stroke-opacity="0.25" stroke-width="2"/>
<path d="M950.4,153.7h6.2M953.5,153.7v15M950.4,168.7h6.2" stroke="#fff" stroke-width="1"/>
</g>
</svg>
<div id="halo" class="abs"><svg width="28" height="30" viewBox="0 0 28 30" style="position:absolute;left:0;top:0"><path d="M17.4 8.4 L25.6 1.6" fill="none" stroke="#fff" stroke-width="1.4"/><path d="M22.2 0.6 L26.6 0.6 L26.6 5 Z" fill="#fff"/></svg></div>

<div id="win1" class="win">
  <div class="titlebar">
    <div class="burger"><i></i><i></i><i></i></div>
    <div class="title">Inspect: undefined</div>
    <svg class="ctrl" style="left:650px" width="80" height="21" viewBox="0 0 80 21"><rect x="2.8" y="12.9" width="14.5" height="4" rx="1" fill="#6a6a6a"/><path d="M31.6 4.9h13.9v12h-13.9z M33.2 8.8v6.4h10.7v-6.4z" fill="#6a6a6a" fill-rule="evenodd"/><path d="M62.9 7 L71.3 15.2 M71.3 7 L62.9 15.2" stroke="#6a6a6a" stroke-width="3.1" fill="none"/></svg>
  </div>
  <div class="hl"></div>
  <div class="tree"><div style="padding-left:22.1px"><span class="tri">▼</span> <span class="g">: Object</span> <span class="b">{</span></div><div style="padding-left:46.1px"><span class="tri">▶</span> <span class="k">d</span><span class="g">: Node</span> <span class="b">{...}</span></div><div style="padding-left:44.3px"><span class="tri">▼</span><span class="br">&lt;</span><span class="t">g</span><span class="br">&gt;</span></div><div style="padding-left:67.7px"><span class="tri">▶</span><span class="br">&lt;</span><span class="t">path</span> <span class="an">d=</span><span class="q">&quot;</span><span class="av">M-55.11362216989743,-268.14464594937147A273.75,273.75,0,0,1,...</span><span class="q">&quot;</span> <span class="an">class=</span><span class="q">&quot;</span><span class="av">node</span></div><div style="padding-left:67.7px"><span class="av">node--leaf</span><span class="q">&quot;</span> <span class="an">style=</span><span class="q">&quot;</span><span class="av">fill-rule: evenodd; fill: rgb(102, 102, 175);</span><span class="q">&quot;</span><span class="br">&gt;</span><span class="x">...</span><span class="br">&lt;/</span><span class="t">path</span><span class="br">&gt;</span></div><div style="padding-left:67.7px"><span class="tri">▶</span><span class="br">&lt;</span><span class="t">text</span> <span class="an">class=</span><span class="q">&quot;</span><span class="av">bundle--text</span><span class="q">&quot;</span><span class="br">&gt;</span><span class="x">Xor</span><span class="br">&lt;/</span><span class="t">text</span><span class="br">&gt;</span></div><div style="padding-left:67.7px"><span class="tri">▶</span> <span class="k">#Properties</span><span class="g">: SVGGElement</span> <span class="b">{...}</span></div><div style="padding-left:44.8px"><span class="br">&lt;/</span><span class="t">g</span><span class="br">&gt;</span></div><div style="padding-left:22.3px"><span class="b">}</span></div></div>
  <div class="gutter"></div>
  <div class="lnum">1</div>
</div>

<div class="bl" style="left:14.7px;top:298.3px;width:732.4px;height:1.7px"></div>
<div class="bl" style="left:14.7px;top:298.3px;width:1.7px;height:451.2px"></div>
<div class="bl" style="left:745.2px;top:298.3px;width:1.9px;height:430px"></div>
<div class="bl" style="left:14.7px;top:747.8px;width:712.3px;height:1.7px"></div>
<div id="win2" class="win">
  <div class="titlebar">
    <div class="burger"><i></i><i></i><i></i></div>
    <div class="title">Inspect: undefined</div>
    <svg class="ctrl" style="left:650px" width="80" height="21" viewBox="0 0 80 21"><rect x="2.8" y="12.9" width="14.5" height="4" rx="1" fill="#ffffff"/><path d="M31.6 4.9h13.9v12h-13.9z M33.2 8.8v6.4h10.7v-6.4z" fill="#ffffff" fill-rule="evenodd"/><path d="M62.9 7 L71.3 15.2 M71.3 7 L62.9 15.2" stroke="#ffffff" stroke-width="3.1" fill="none"/></svg>
  </div>
  <div class="hl"></div>
  <div class="tree"><div style="padding-left:22.1px"><span class="tri">▼</span> <span class="g">: Object</span> <span class="b">{</span></div><div style="padding-left:46.1px"><span class="tri">▶</span> <span class="k">d</span><span class="g">: Node</span> <span class="b">{...}</span></div><div style="padding-left:44.3px"><span class="tri">▼</span><span class="br">&lt;</span><span class="t">g</span><span class="br">&gt;</span></div><div style="padding-left:67.7px"><span class="tri">▶</span><span class="br">&lt;</span><span class="t">path</span> <span class="an">d=</span><span class="q">&quot;</span><span class="av">M6.436137708598529,257.9197086912824A258,258,0,0,1,0.0040526...</span><span class="q">&quot;</span> <span class="an">class=</span><span class="q">&quot;</span><span class="av">node</span></div><div style="padding-left:67.7px"><span class="av">node--leaf</span><span class="q">&quot;</span> <span class="an">style=</span><span class="q">&quot;</span><span class="av">fill-rule: evenodd; fill: rgb(102, 102, 175);</span><span class="q">&quot;</span><span class="br">&gt;</span><span class="x">...</span><span class="br">&lt;/</span><span class="t">path</span><span class="br">&gt;</span></div><div style="padding-left:67.7px"><span class="tri">▶</span><span class="br">&lt;</span><span class="t">text</span> <span class="an">class=</span><span class="q">&quot;</span><span class="av">bundle--text</span><span class="q">&quot;</span><span class="br">&gt;</span><span class="x">Xor</span><span class="br">&lt;/</span><span class="t">text</span><span class="br">&gt;</span></div><div style="padding-left:67.7px"><span class="tri">▶</span> <span class="k">#Properties</span><span class="g">: SVGGElement</span> <span class="b">{...}</span></div><div style="padding-left:44.8px"><span class="br">&lt;/</span><span class="t">g</span><span class="br">&gt;</span></div><div style="padding-left:22.3px"><span class="b">}</span></div></div>
</div>
</body>
</html>
